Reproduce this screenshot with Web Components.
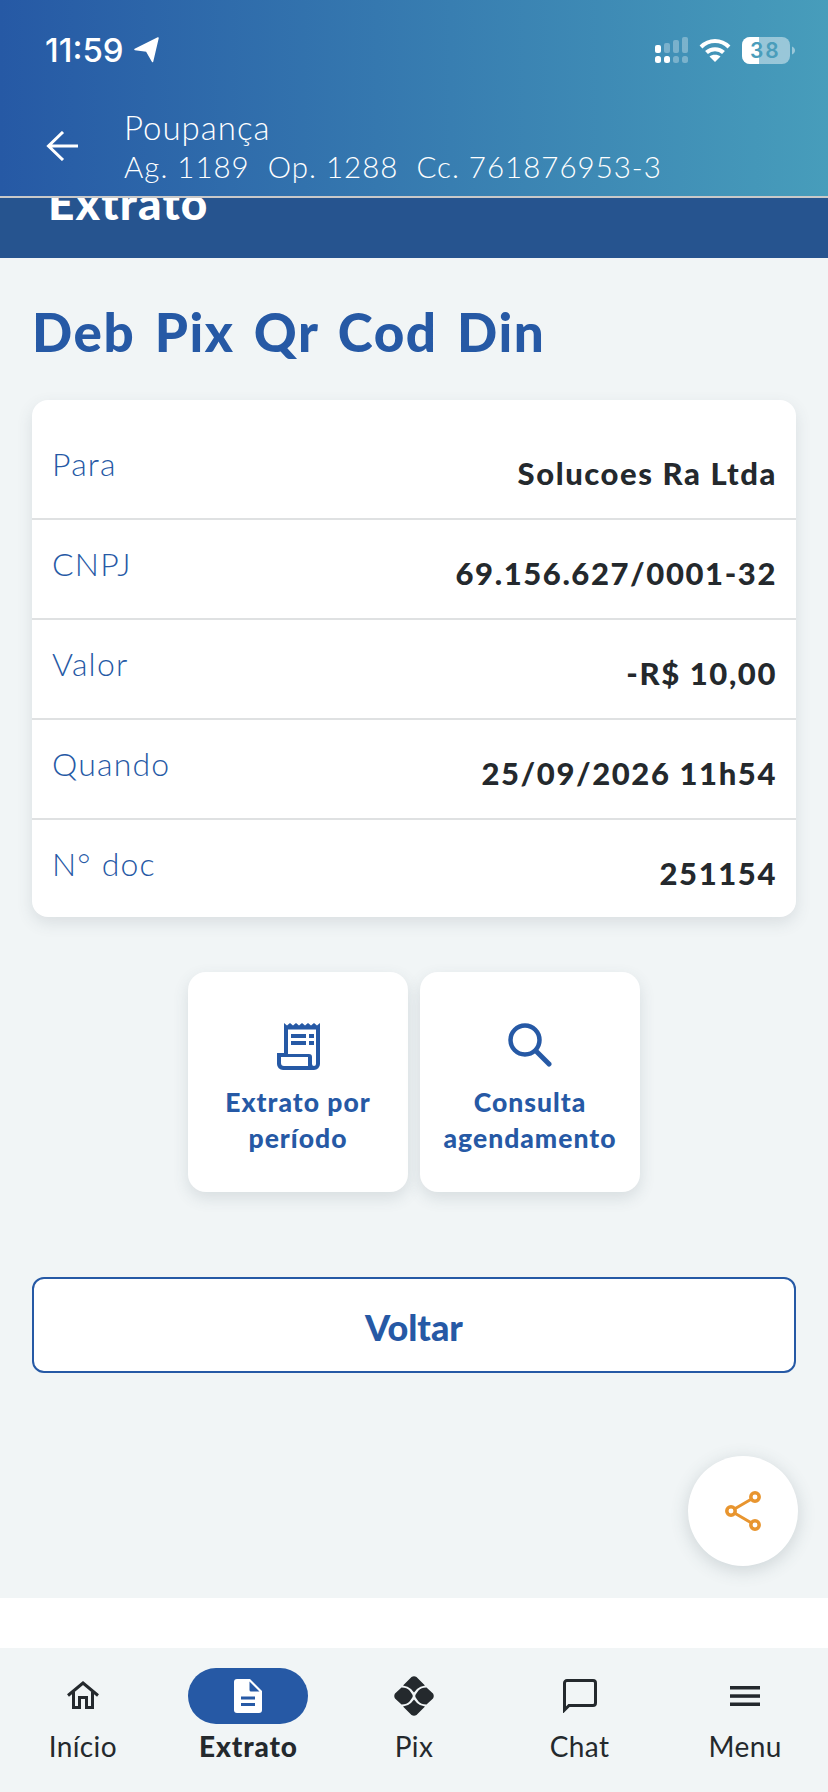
<!DOCTYPE html>
<html lang="pt-BR">
<head>
<meta charset="UTF-8">
<title>Extrato</title>
<style>
  html, body { margin: 0; padding: 0; }
  body { position: relative; width: 828px; height: 1792px; overflow: hidden; font-family: Lato, "Open Sans", sans-serif; background: #f1f5f6; }
</style>
</head>
<body>
<template id="tpl-topo">
  <style>
    :host { display: block; height: 258px; overflow: hidden; background: #26548f; }
    .grad { height: 198px; box-sizing: border-box; border-bottom: 2px solid #c9c9c9; background: linear-gradient(90deg, #2659a5 0%, #479dbb 100%); color: #fff; padding: 33px 38px 0 45px; }
    .status { display: flex; align-items: center; height: 34px; }
    .hora { font: 500 33px Inter, sans-serif; }
    .seta-loc { margin-left: 10px; }
    .dir { margin-left: auto; display: flex; align-items: center; gap: 11px; }
    .bat { position: relative; width: 48px; height: 27px; display: block; }
    .bat span { position: absolute; left: 8px; top: 0; line-height: 27px; font: 600 21px/27px Inter, sans-serif; color: #4a9dbb; letter-spacing: 2px; }
    .conta { display: flex; align-items: center; margin-top: 38px; }
    .voltar { width: 33px; height: 30px; margin: 2px 45px 0 1px; flex: none; }
    .tit { font-size: 33px; line-height: 44px; font-weight: 300; letter-spacing: 1px; }
    .sub { font-size: 29.5px; line-height: 36px; font-weight: 300; white-space: pre; letter-spacing: 1px; }
    .faixa { height: 60px; padding-left: 48px; overflow: hidden; color: #fff; font-weight: 900; font-size: 46px; line-height: 50px; letter-spacing: 1.2px; }
    .faixa span { display: block; margin-top: -20px; }
  </style>
  <div class="grad">
    <div class="status">
      <span class="hora">11:59</span>
      <svg class="seta-loc" width="25" height="26" viewBox="0 0 25 26"><path fill="#fff" stroke="#fff" stroke-width="1.500" stroke-linejoin="round" d="M24 1 1 12.500l11.500 1.500 6 10.500z"/></svg>
      <div class="dir">
        <svg width="33" height="26" viewBox="0 0 33 26">
          <g fill="#fff"><rect x="0" y="8" width="6" height="8" rx="2"/><rect x="0" y="19" width="6" height="7" rx="2.500"/><rect x="9" y="19" width="6" height="7" rx="2.500"/></g>
          <g fill="#fff" opacity=".3"><rect x="9" y="6" width="6" height="10" rx="2"/><rect x="18" y="3" width="6" height="13" rx="2"/><rect x="27" y="0" width="6" height="16" rx="2"/><rect x="18" y="19" width="6" height="7" rx="2.500"/><rect x="27" y="19" width="6" height="7" rx="2.500"/></g>
        </svg>
        <svg width="32" height="24" viewBox="0 0 32 24"><path fill="none" stroke="#fff" stroke-width="4" d="M2 9C10 1 22 1 30 9M7.500 14.500C12 10 20 10 24.500 14.500"/><path fill="#fff" d="M16 24 10.500 18.500C13 16 19 16 21.500 18.500z"/></svg>
        <div class="bat">
          <svg width="53" height="27" viewBox="0 0 53 27" style="position:absolute;left:0;top:0">
            <rect x="0" y="0" width="48" height="27" rx="8" fill="#fff" opacity=".45"/>
            <path d="M8 0h9v27H8a8 8 0 0 1-8-8V8a8 8 0 0 1 8-8z" fill="#fff"/>
            <path d="M50 9.500c2 .8 3 2.300 3 4s-1 3.200-3 4z" fill="#fff" opacity=".45"/>
          </svg>
          <span>38</span>
        </div>
      </div>
    </div>
    <div class="conta">
      <svg class="voltar" viewBox="0 0 33 30"><path fill="none" stroke="#fff" stroke-width="3" d="M32 15H3M17 1 2.500 15 17 29"/></svg>
      <div>
        <div class="tit">Poupança</div>
        <div class="sub">Ag. 1189  Op. 1288  Cc. 761876953-3</div>
      </div>
    </div>
  </div>
  <div class="faixa"><span>Extrato</span></div>
</template>

<template id="tpl-linha">
  <style>
    :host { display: flex; justify-content: space-between; height: 98px; border-bottom: 2px solid #dfe1e2; padding: 0 19px 0 20px; }
    :host(:last-child) { border-bottom: 0; height: 97px; }
    :host([alto]) { height: 118px; }
    .l { font-size: 32px; line-height: 36px; color: #2659a5; font-weight: 300; margin-top: 26px; letter-spacing: 1.2px; }
    :host([alto]) .l { margin-top: 46px; }
    .v { font-size: 31px; line-height: 36px; color: #24292d; font-weight: 900; margin-top: 35px; letter-spacing: 1.6px; }
    :host([alto]) .v { margin-top: 55px; }
  </style>
  <span class="l"><slot name="rotulo"></slot></span>
  <span class="v"><slot name="valor"></slot></span>
</template>

<template id="tpl-cartao">
  <style>
    :host { display: block; margin: 0 32px; background: #fff; border-radius: 16px; box-shadow: 0 6px 16px rgba(60,80,90,.13); overflow: hidden; }
  </style>
  <slot></slot>
</template>

<template id="tpl-atalho">
  <style>
    :host { display: flex; flex-direction: column; align-items: center; width: 220px; height: 220px; box-sizing: border-box; padding-top: 48px; background: #fff; border-radius: 18px; box-shadow: 0 6px 16px rgba(60,80,90,.14); }
    .ic { height: 52px; display: flex; align-items: center; }
    .t { margin-top: 12px; text-align: center; color: #2659a5; font-size: 26.5px; line-height: 36px; font-weight: 900; letter-spacing: 1px; }
  </style>
  <div class="ic"><slot name="icone"></slot></div>
  <div class="t"><slot></slot></div>
</template>

<template id="tpl-botao">
  <style>
    :host { display: flex; align-items: center; justify-content: center; height: 96px; margin: 0 32px; box-sizing: border-box; border: 2px solid #2659a5; border-radius: 12px; color: #2659a5; font-size: 36px; font-weight: 900; background: #fff; padding-top: 3px; }
  </style>
  <slot></slot>
</template>

<template id="tpl-fab">
  <style>
    :host { display: flex; position: absolute; left: 688px; top: 1456px; width: 110px; height: 110px; border-radius: 50%; background: #fff; align-items: center; justify-content: center; box-shadow: 0 4px 18px rgba(60,80,90,.2); }
  </style>
  <slot></slot>
</template>

<template id="tpl-nav">
  <style>
    :host { display: grid; grid-template-columns: repeat(5, 1fr); height: 144px; background: #f1f5f6; }
  </style>
  <slot></slot>
</template>

<template id="tpl-nav-item">
  <style>
    :host { display: flex; flex-direction: column; align-items: center; padding-top: 20px; color: #24292d; }
    .p { width: 120px; height: 56px; border-radius: 28px; display: flex; align-items: center; justify-content: center; }
    :host([ativo]) .p { background: #2659a5; }
    .t { font-size: 28px; line-height: 36px; margin-top: 4px; font-weight: 400; letter-spacing: .4px; }
    :host([ativo]) .t { font-weight: 900; letter-spacing: .9px; }
  </style>
  <div class="p"><slot name="icone"></slot></div>
  <div class="t"><slot></slot></div>
</template>

<app-topo></app-topo>
<main style="display:block;height:1340px">
  <h1 style="margin:0;padding:41px 32px 0;height:142px;box-sizing:border-box;font-size:53px;line-height:66px;font-weight:900;color:#2659a5;letter-spacing:1.6px;word-spacing:5px">Deb Pix Qr Cod Din</h1>
  <app-cartao>
    <app-linha alto><span slot="rotulo">Para</span><span slot="valor">Solucoes Ra Ltda</span></app-linha>
    <app-linha><span slot="rotulo">CNPJ</span><span slot="valor">69.156.627/0001-32</span></app-linha>
    <app-linha><span slot="rotulo">Valor</span><span slot="valor">-R$ 10,00</span></app-linha>
    <app-linha><span slot="rotulo">Quando</span><span slot="valor">25/09/2026 11h54</span></app-linha>
    <app-linha><span slot="rotulo">N° doc</span><span slot="valor">251154</span></app-linha>
  </app-cartao>
  <div style="display:flex;justify-content:center;gap:12px;margin-top:55px">
    <app-atalho>
      <svg slot="icone" width="43" height="47" viewBox="0 0 43 47" fill="none">
        <path fill="#2659a5" d="M7 0l3 2.500L13 0l3 2.500L19 0l3 2.500L25 0l3 2.500L31 0l3 2.500L37 0l3 2.500L43 0v41a6 6 0 0 1-6 6H6a6 6 0 0 1-6-6v-11h7z"/>
        <path fill="#fff" d="M11 6.500h28V41a2 2 0 0 1-4 0v-7a3 3 0 0 0-3-3H11zM4 34h27v9H7a3 3 0 0 1-3-3z"/>
        <path fill="#2659a5" d="M14 11h15v4H14zM32 11h5v4h-5zM14 18h15v4H14zM32 18h5v4h-5z"/>
      </svg>
      Extrato por<br>período
    </app-atalho>
    <app-atalho>
      <svg slot="icone" width="44" height="44" viewBox="0 0 44 44" fill="none" stroke="#2659a5" style="margin-top:-2px"><circle cx="17" cy="17" r="14.500" stroke-width="4.500"/><path d="M28 28 41 41" stroke-width="5" stroke-linecap="round"/></svg>
      Consulta<br>agendamento
    </app-atalho>
  </div>
  <app-botao style="margin-top:85px">Voltar</app-botao>
</main>
<div style="height:50px;background:#fff"></div>
<app-nav>
  <app-nav-item>
    <svg slot="icone" width="32" height="28" viewBox="0 0 32 28" fill="none" stroke="#24292d" stroke-width="3" style="margin-top:-2px"><path d="M1 14.500 16 2 31 14.500"/><path d="M6.500 11V26.500H12.500V16.500H19.500V26.500H25.500V11"/></svg>
    Início
  </app-nav-item>
  <app-nav-item ativo>
    <svg slot="icone" width="28" height="34" viewBox="0 0 28 34"><path fill="#fff" d="M3 0h13l12 12v19a3 3 0 0 1-3 3H3a3 3 0 0 1-3-3V3a3 3 0 0 1 3-3z"/><path fill="#2659a5" d="M15.500 2.500 25.500 12.500H17a1.500 1.500 0 0 1-1.500-1.500zM7 17.500h14v3H7zM7 24h14v3H7z"/></svg>
    Extrato
  </app-nav-item>
  <app-nav-item>
    <svg slot="icone" width="40" height="40" viewBox="0 0 40 40" fill="#24292d">
      <path d="M17.500 1Q20-.5 22.500 1L31 9.500Q26 10 23 13L20 16.500 17 13Q14 10 9 9.500z"/>
      <path d="M17.500 39Q20 40.500 22.500 39L31 30.500Q26 30 23 27L20 23.500 17 27Q14 30 9 30.500z"/>
      <path d="M1 17.500 7.500 11.500Q13 11.500 15.500 14.500L18 18Q19.500 20 18 22L15.500 25.500Q13 28.500 7.500 28.500L1 22.500Q-.5 20 1 17.500z"/>
      <path d="M39 17.500 32.500 11.500Q27 11.500 24.500 14.500L22 18Q20.500 20 22 22L24.500 25.500Q27 28.500 32.500 28.500L39 22.500Q40.500 20 39 17.500z"/>
    </svg>
    Pix
  </app-nav-item>
  <app-nav-item>
    <svg slot="icone" width="34" height="34" viewBox="0 0 34 34" fill="none" stroke="#24292d" stroke-width="3"><path d="M1.500 31V4a2.500 2.500 0 0 1 2.500-2.500h26A2.500 2.500 0 0 1 32.500 4v20a2.500 2.500 0 0 1-2.500 2.500H6z"/></svg>
    Chat
  </app-nav-item>
  <app-nav-item>
    <svg slot="icone" width="30" height="20" viewBox="0 0 30 20" fill="#24292d"><rect width="30" height="3.500"/><rect y="8.300" width="30" height="3.500"/><rect y="16.500" width="30" height="3.500"/></svg>
    Menu
  </app-nav-item>
</app-nav>
<app-fab>
  <svg width="40" height="40" viewBox="0 0 40 40" fill="none" stroke="#e8952f"><path d="M8 20 32 6M8 20l24 14" stroke-width="3"/><g fill="#fff" stroke-width="3.500"><circle cx="8" cy="20" r="4.200"/><circle cx="32" cy="6" r="4.200"/><circle cx="32" cy="34" r="4.200"/></g></svg>
</app-fab>

<script>
  function registrar(nome, tpl) {
    customElements.define(nome, class extends HTMLElement {
      constructor() {
        super();
        this.attachShadow({ mode: 'open' });
        this.shadowRoot.appendChild(document.getElementById(tpl).content.cloneNode(true));
      }
    });
  }
  registrar('app-topo', 'tpl-topo');
  registrar('app-cartao', 'tpl-cartao');
  registrar('app-linha', 'tpl-linha');
  registrar('app-atalho', 'tpl-atalho');
  registrar('app-botao', 'tpl-botao');
  registrar('app-fab', 'tpl-fab');
  registrar('app-nav', 'tpl-nav');
  registrar('app-nav-item', 'tpl-nav-item');
</script>
</body>
</html>
